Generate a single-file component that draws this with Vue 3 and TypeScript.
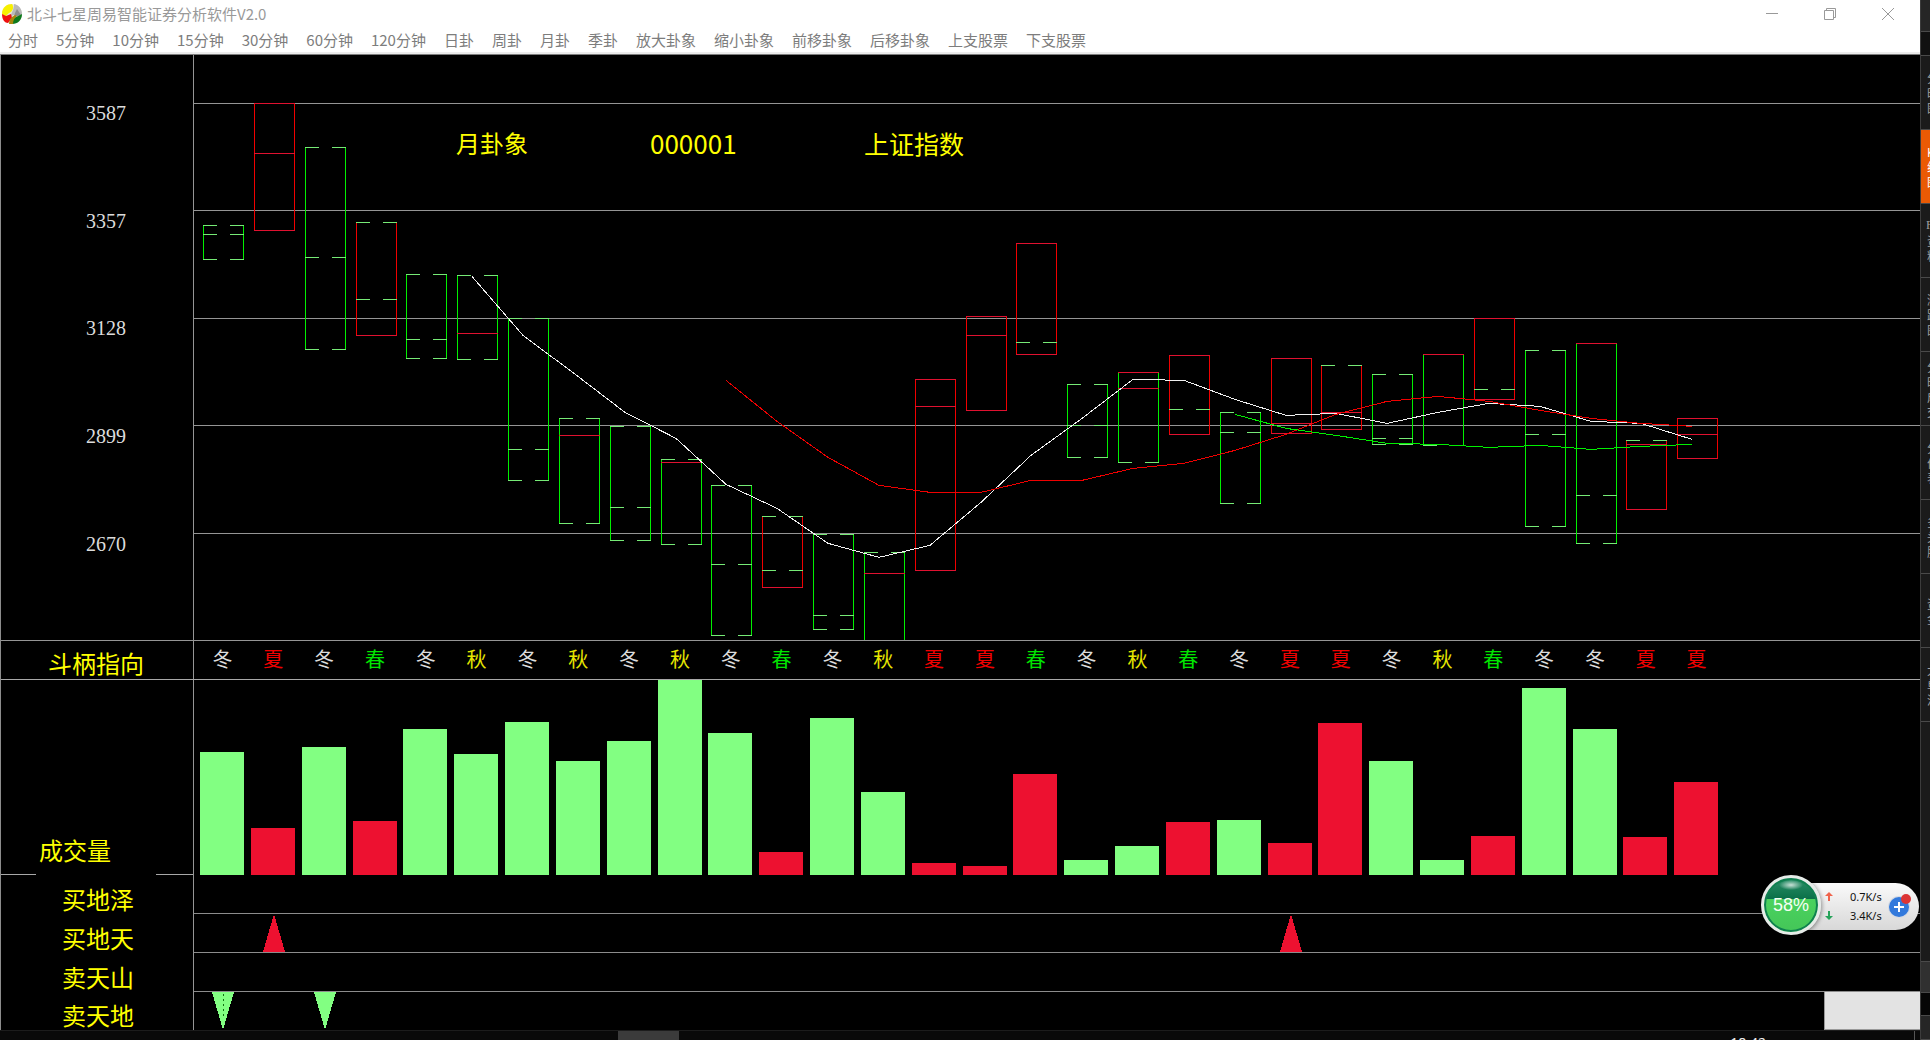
<script setup lang="ts">
type Tone = 'up' | 'down'
/** A broken (yin) or solid (yang) line of the trigram, with its height on the plot. */
type Yao = [kind: 'yin' | 'yang', y: number]
interface Candle {
  tone: Tone
  lines: [Yao, Yao, Yao]
}

const menu = [
  '分时', '5分钟', '10分钟', '15分钟', '30分钟', '60分钟', '120分钟', '日卦', '周卦',
  '月卦', '季卦', '放大卦象', '缩小卦象', '前移卦象', '后移卦象', '上支股票', '下支股票',
]

const STEP = 305 / 6
const WIDTH = 1726

const gridLines = [48, 155, 263, 370, 478]
const priceLabels = ['3587', '3357', '3128', '2899', '2670']

const down = (a: Yao, b: Yao, c: Yao): Candle => ({ tone: 'down', lines: [a, b, c] })
const up = (a: Yao, b: Yao, c: Yao): Candle => ({ tone: 'up', lines: [a, b, c] })
const o = (y: number): Yao => ['yin', y]
const s = (y: number): Yao => ['yang', y]

const candles: Candle[] = [
  down(o(170), o(179), o(204)),
  up(s(48), s(98), s(175)),
  down(o(92), o(202), o(294)),
  up(o(167), o(244), s(280)),
  down(o(219), o(284), o(303)),
  down(o(220), s(278), o(304)),
  down(o(263), o(394), o(425)),
  down(o(363), s(380), o(468)),
  down(o(371), o(452), o(485)),
  down(o(404), s(407), o(489)),
  down(o(430), o(509), o(580)),
  up(o(461), o(515), s(532)),
  down(o(479), o(560), o(574)),
  down(o(497), s(518), o(585)),
  up(s(324), s(351), s(515)),
  up(s(261), s(280), s(355)),
  up(s(188), o(287), s(299)),
  down(o(329), o(370), o(402)),
  down(s(317), s(333), o(407)),
  up(s(300), o(354), s(379)),
  down(o(357), o(377), o(448)),
  up(s(303), s(368), s(378)),
  up(o(310), s(357), s(374)),
  down(o(319), o(383), o(389)),
  down(s(299), o(390), o(390)),
  up(s(263), o(334), s(344)),
  down(o(295), o(379), o(471)),
  down(s(288), o(440), o(488)),
  up(o(385), s(389), s(454)),
  up(s(363), s(379), s(403)),
]

const boxLeft = (i: number) => Math.round(9 + i * STEP)
const BOX = 41

function yaoPath(i: number, [kind, y]: Yao): string {
  const x = boxLeft(i)
  const cy = y + 0.5
  return kind === 'yang'
    ? `M${x} ${cy}H${x + BOX}`
    : `M${x} ${cy}h14M${x + BOX - 14} ${cy}h14`
}

function sidePath(i: number, c: Candle): string {
  const x = boxLeft(i)
  const top = c.lines[0][1]
  const bottom = c.lines[2][1] + 1
  return `M${x + 0.5} ${top}V${bottom}M${x + BOX - 0.5} ${top}V${bottom}`
}

function average(first: number, ys: number[]): string {
  return ys.map((y, k) => `${Math.round(24 + (first + k) * STEP)},${y + 0.5}`).join(' ')
}

const averages = [
  {
    name: 'white',
    points: average(5, [
      221, 280, 318, 357, 383, 429, 453, 488, 502, 490, 447, 400, 363, 324, 325, 344, 360, 358,
      368, 357, 348, 351, 366, 368, 384,
    ]),
  },
  {
    name: 'red',
    points: average(10, [
      325, 366, 402, 430, 437, 437, 425, 425, 413, 408, 395, 379, 359, 346, 341, 346, 355, 363,
      368, 371,
    ]),
  },
  { name: 'green', points: average(20, [359, 373, 380, 388, 389, 392, 390, 394, 391, 389]) },
]

const seasons = [...'冬夏冬春冬秋冬秋冬秋冬春冬秋夏夏春冬秋春冬夏夏冬秋春冬冬夏夏']
const seasonClass: Record<string, string> = { 春: 'spring', 夏: 'summer', 秋: 'autumn', 冬: 'winter' }

const volumes = [
  124, 48, 129, 55, 147, 122, 154, 115, 135, 196, 143, 24, 158, 84, 13, 10, 102, 16, 30, 54, 56,
  33, 153, 115, 16, 40, 188, 147, 39, 94,
]

interface Signal {
  label: string
  size: number
  marks: number[]
  shape?: 'rise' | 'fall'
}
const signals: Signal[] = [
  { label: '买地泽', size: 39, marks: [] },
  { label: '买地天', size: 39, marks: [1, 21], shape: 'rise' },
  { label: '卖天山', size: 39, marks: [] },
  { label: '卖天地', size: 38, marks: [0, 2], shape: 'fall' },
]
function markPoints(i: number, row: Signal): string {
  const x = Math.round(29 + i * STEP)
  return row.shape === 'rise'
    ? `${x},0 ${x + 11},${row.size} ${x - 11},${row.size}`
    : `${x - 11},0 ${x + 11},0 ${x},${row.size}`
}

const sideTabs = [
  { lines: ['分', '时', '图'], active: false },
  { lines: ['K', '线', '图'], active: true },
  { lines: ['F10', '资', '料'], active: false },
  { lines: ['涨', '跌', '图'], active: false },
  { lines: ['分', '时', '成', '交'], active: false },
  { lines: ['分', '价', '表'], active: false },
  { lines: ['多', '头', '股'], active: false },
  { lines: ['资', '金'], active: false },
  { lines: ['大', '单', '流'], active: false },
]
</script>

<template>
  <div class="desktop">
    <div class="screen">
      <main class="window">
        <header class="titlebar">
          <svg class="logo" viewBox="0 0 20 20" aria-hidden="true">
            <circle cx="10" cy="10" r="10" fill="#e8e8dc" />
            <path d="M0 10C0 3 5 0 10 0c2 3 1 6-1 8-3 1-4 3-6 5z" fill="#f7f000" />
            <path d="M12 0c5 1 8 5 8 10l-4 2-5-1-2 2c-1-3 3-6 3-13z" fill="#b9b9b9" />
            <path d="M15 5l4 6-7 2 1-4z" fill="#8d8d8d" />
            <path d="M0 10l4 2 5-2 1 4-4 5C3 19 0 16 0 10z" fill="#ee1010" />
            <path d="M20 10c0 6-4 10-10 10-1-3 1-6 4-7z" fill="#0d7a1c" />
            <path d="M7 20c0-4 2-7 6-9l2 1c-3 2-4 5-4 8z" fill="#a8860c" />
          </svg>
          <h1>北斗七星周易智能证券分析软件V2.0</h1>
          <div class="controls">
            <button type="button" aria-label="最小化">
              <svg viewBox="0 0 14 14"><path d="M1 6.500H13" /></svg>
            </button>
            <button type="button" aria-label="还原">
              <svg viewBox="0 0 14 14"><path d="M1.500 3.500h9v9h-9zM3.500 3.500v-2h9v9h-2" /></svg>
            </button>
            <button type="button" aria-label="关闭">
              <svg viewBox="0 0 14 14"><path d="M1 1L13 13M13 1L1 13" /></svg>
            </button>
          </div>
        </header>

        <nav class="menu">
          <button v-for="item in menu" :key="item" type="button">{{ item }}</button>
        </nav>

        <div class="board">
          <section class="row row-price">
            <div class="side axis">
              <span v-for="p in priceLabels" :key="p">{{ p }}</span>
            </div>
            <div class="plot">
              <svg :viewBox="`0 0 ${WIDTH} 585`" preserveAspectRatio="none">
                <path
                  v-for="y in gridLines"
                  :key="y"
                  class="grid"
                  :d="`M0 ${y + 0.5}H${WIDTH}`"
                />
                <g v-for="(c, i) in candles" :key="i">
                  <path :class="c.tone" :d="sidePath(i, c)" />
                  <path v-for="(l, k) in c.lines" :key="k" :class="l[0]" :d="yaoPath(i, l)" />
                </g>
                <polyline
                  v-for="a in averages"
                  :key="a.name"
                  :class="['avg', a.name]"
                  :points="a.points"
                />
              </svg>
              <div class="caption">
                <span class="period">月卦象</span>
                <span class="code">000001</span>
                <span>上证指数</span>
              </div>
            </div>
          </section>

          <section class="row row-season">
            <div class="side name pointer">斗柄指向</div>
            <div class="plot seasons">
              <span v-for="(q, i) in seasons" :key="i" :class="seasonClass[q]">{{ q }}</span>
            </div>
          </section>

          <section class="row row-volume">
            <div class="side name volume">成交量</div>
            <div class="plot">
              <svg :viewBox="`0 0 ${WIDTH} 196`" preserveAspectRatio="none">
                <path class="grid bright" :d="`M0 195.500H${WIDTH}`" />
                <rect
                  v-for="(v, i) in volumes"
                  :key="i"
                  :class="['bar', candles[i].tone]"
                  :x="Math.round(6 + i * STEP)"
                  :y="196 - v"
                  width="44"
                  :height="v"
                />
              </svg>
            </div>
          </section>

          <section
            v-for="row in signals"
            :key="row.label"
            class="row row-signal"
            :style="{ flexGrow: row.size }"
          >
            <div class="side name">{{ row.label }}</div>
            <div class="plot">
              <svg :viewBox="`0 0 ${WIDTH} ${row.size}`" preserveAspectRatio="none">
                <polygon
                  v-for="m in row.marks"
                  :key="m"
                  :class="['mark', row.shape]"
                  :points="markPoints(m, row)"
                />
                <path v-if="row.shape === 'fall'" class="dots" d="M29.500 2V24" />
              </svg>
              <div v-if="row.shape === 'fall'" class="blank"></div>
            </div>
          </section>
        </div>

        <aside class="meter">
          <div class="pill">
            <div class="rates">
              <svg viewBox="0 0 8 9"><path d="M4 0l4 4H5v5H3V4H0z" fill="#f0644c" /></svg>
              <span>0.7K/s</span>
              <svg viewBox="0 0 8 9"><path d="M4 9l4-4H5V0H3v5H0z" fill="#27a35a" /></svg>
              <span>3.4K/s</span>
            </div>
            <button type="button" aria-label="加速">
              <svg viewBox="0 0 26 26">
                <circle cx="12" cy="14" r="11" fill="#d5dbe4" />
                <circle cx="12" cy="14" r="10" fill="#3279dc" />
                <path d="M12 9v10M7 14h10" stroke="#fff" stroke-width="2" />
                <circle cx="19" cy="6" r="5" fill="#dc3535" />
              </svg>
            </button>
          </div>
          <div class="ball">58%</div>
        </aside>
      </main>

      <aside class="strip">
        <div class="strip-head"></div>
        <div class="strip-gap"></div>
        <button
          v-for="(t, i) in sideTabs"
          :key="i"
          type="button"
          :class="{ active: t.active }"
        >
          <span v-for="(l, k) in t.lines" :key="k" :class="{ latin: l === 'F10' }">{{ l }}</span>
        </button>
        <div class="strip-rest"></div>
        <div class="strip-light"></div>
        <div class="strip-black"></div>
        <div class="strip-foot"></div>
      </aside>
    </div>
    <footer class="taskbar">
      <div class="task"></div>
      <time>18:42</time>
      <div class="peek"></div>
    </footer>
  </div>
</template>

<style>
body {
  background: #000;
  overflow: hidden;
}
</style>

<style scoped>
.desktop {
  position: relative;
  height: 100vh;
  background: #000;
  font-family: "Noto Sans CJK SC", "Noto Sans", sans-serif;
}
.screen {
  display: flex;
  height: 100%;
}
button {
  margin: 0;
  padding: 0;
  border: 0;
  background: none;
  color: inherit;
  font: inherit;
}
.window {
  position: relative;
  display: flex;
  flex: 1;
  flex-direction: column;
  min-width: 0;
  padding-bottom: 10px;
  box-sizing: border-box;
}

.titlebar {
  display: flex;
  align-items: center;
  height: 28px;
  padding-left: 2px;
  background: #fff;
  color: #999;
}
.logo {
  width: 20px;
  height: 20px;
  margin-right: 5px;
}
h1 {
  margin: 0;
  font-size: 15px;
  font-weight: 400;
  line-height: 24px;
}
.controls {
  display: flex;
  margin-left: auto;
  padding-right: 3px;
}
.controls button {
  display: grid;
  place-items: center;
  width: 58px;
  height: 28px;
}
.controls svg {
  width: 14px;
  height: 14px;
  fill: none;
  stroke: #999;
}
.menu {
  display: flex;
  gap: 18px;
  height: 24px;
  padding-left: 8px;
  border-bottom: 2px solid #ececec;
  background: #fff;
  color: #7d7d7d;
  font-size: 15px;
  line-height: 24px;
  white-space: nowrap;
}

.board {
  display: flex;
  flex: 1;
  flex-direction: column;
  min-height: 0;
  border-top: 1px solid #7d7d7d;
  border-left: 1px solid #8c8c8c;
}
.row {
  display: flex;
  flex: 39 1 0;
  min-height: 0;
  box-sizing: border-box;
}
.row-price {
  flex-grow: 586;
  border-bottom: 1px solid #959595;
}
.row-season {
  flex-grow: 38;
  border-bottom: 1px solid #a8a8a8;
}
.row-volume {
  flex-grow: 196;
}
.row-signal:not(:last-child) .plot {
  border-bottom: 1px solid #8c8c8c;
}
.side {
  flex: 0 0 193px;
  box-sizing: border-box;
  border-right: 1px solid #959595;
}
.plot {
  position: relative;
  flex: 1;
  min-width: 0;
  box-sizing: border-box;
}
.plot svg {
  display: block;
  width: 100%;
  height: 100%;
  shape-rendering: crispEdges;
}
.plot path,
.plot polyline {
  fill: none;
  vector-effect: non-scaling-stroke;
}
.grid {
  stroke: #959595;
}
.grid.bright {
  stroke: #a8a8a8;
}
.up {
  stroke: #f00000;
}
.down {
  stroke: #00f000;
}
.yang {
  stroke: #e01130;
}
.yin {
  stroke: #76ea76;
}
.avg.white {
  stroke: #f0f0f0;
}
.avg.red {
  stroke: #f00000;
}
.avg.green {
  stroke: #00f000;
}
.bar {
  stroke: none;
}
.bar.up,
.mark.rise {
  fill: #ed1130;
}
.bar.down,
.mark.fall {
  fill: #82ff82;
}
.dots {
  stroke: #107010;
  stroke-dasharray: 2 3;
}

.axis {
  display: grid;
  grid-template-rows: repeat(4, minmax(0, 215fr)) minmax(0, 214fr);
  padding-top: 47px;
  padding-left: 85px;
  color: #dcdcdc;
  font-family: "Liberation Serif", serif;
  font-size: 20px;
  line-height: 22px;
}
.caption {
  position: absolute;
  top: 73px;
  left: 262px;
  display: grid;
  grid-template-columns: 194px 214px auto;
  color: #ff0;
  font-size: 25px;
  line-height: 30px;
}
.period {
  font-size: 24px;
}
.code {
  font-size: 26px;
}
.name {
  display: flex;
  align-items: center;
  padding-left: 61px;
  color: #ff0;
  font-size: 24px;
  line-height: 30px;
}
.pointer {
  padding-top: 6px;
  padding-left: 47px;
}
.volume {
  align-items: flex-end;
  padding-bottom: 10px;
  padding-left: 38px;
  background:
    linear-gradient(#a8a8a8, #a8a8a8) left bottom / 35px 1px no-repeat,
    linear-gradient(#a8a8a8, #a8a8a8) right bottom / 37px 1px no-repeat;
}
.row-signal .name {
  padding-top: 8px;
}
.seasons {
  display: grid;
  grid-template-columns: 18fr repeat(30, minmax(0, 305fr)) 1188fr;
  align-items: center;
  font-size: 20px;
  line-height: 28px;
  text-align: center;
}
.seasons span {
  margin-top: -2px;
}
.seasons span:first-child {
  grid-column-start: 2;
}
.winter {
  color: #dcdcdc;
}
.seasons .summer {
  color: #f00000;
}
.spring {
  color: #00e600;
}
.autumn {
  color: #e6e600;
}
.blank {
  position: absolute;
  top: 0;
  right: 0;
  bottom: 0;
  width: 96px;
  box-sizing: border-box;
  border-left: 1px solid #999;
  border-bottom: 1px solid #999;
  background: #e3e3e3;
}

.meter {
  position: absolute;
  right: 1px;
  bottom: 105px;
  display: flex;
  align-items: center;
  height: 60px;
  padding-left: 30px;
}
.pill {
  display: flex;
  align-items: center;
  gap: 5px;
  width: 89px;
  height: 47px;
  margin-top: 2px;
  padding-right: 5px;
  padding-left: 34px;
  border-radius: 0 24px 24px 0;
  background: linear-gradient(#fafafa, #d8d8d8);
  color: #111;
  box-sizing: content-box;
}
.rates {
  display: grid;
  grid-template-columns: 8px auto;
  column-gap: 17px;
  align-items: center;
  font-family: "Noto Sans", sans-serif;
  font-size: 11px;
  line-height: 19px;
}
.rates svg {
  width: 8px;
  height: 9px;
}
.pill button {
  flex: none;
  width: 26px;
  height: 26px;
}
.pill button svg {
  display: block;
  width: 26px;
  height: 26px;
}
.ball {
  position: absolute;
  left: 0;
  width: 54px;
  height: 54px;
  border: 3px solid #e6ebe8;
  border-radius: 50%;
  background:
    radial-gradient(ellipse 12px 5px at 50% 13%, #ffffffc0 0, #ffffff00 100%),
    linear-gradient(#2a8f68 0, #0a7048 39%, #4ad25e 39%, #44c658 100%);
  box-shadow: inset 0 0 0 2px #0f8050, 1px 1px 4px #0006;
  color: #f4fff4;
  font-family: "Liberation Sans", sans-serif;
  font-size: 18px;
  line-height: 54px;
  text-align: center;
}

.strip {
  display: flex;
  flex: 0 0 10px;
  flex-direction: column;
  box-sizing: border-box;
  overflow: hidden;
  border-left: 1px solid #3c3c3c;
  background: #1b1b1b;
}
.strip > * {
  box-sizing: border-box;
  flex: none;
  border-bottom: 1px solid #4a4a4a;
}
.strip-head {
  height: 32px;
  background: #262626;
}
.strip-gap {
  height: 24px;
  background: #111;
}
.strip button {
  display: flex;
  flex-direction: column;
  justify-content: center;
  height: 74px;
  padding-left: 6px;
  color: #a0a0a0;
  font-family: "Noto Sans CJK SC", sans-serif;
  font-size: 12px;
  line-height: 15px;
  text-align: left;
  white-space: nowrap;
}
.strip button.active {
  background: #ea5a04;
  color: #fff;
}
.strip .latin {
  margin-left: -1px;
  font-family: "Liberation Serif", serif;
}
.strip .strip-rest {
  flex: 1;
}
.strip-light {
  height: 31px;
  background: #303030;
}
.strip-black {
  height: 23px;
  background: #060606;
}
.strip-foot {
  height: 24px;
  background: #262626;
}

.taskbar {
  position: absolute;
  right: 10px;
  bottom: 0;
  left: 0;
  display: flex;
  height: 10px;
  box-sizing: border-box;
  overflow: hidden;
  border-top: 1px solid #1c1c1c;
  background: #090909;
}
.task {
  width: 61px;
  margin-left: 32.2%;
  background: #3b3b3b;
}
time {
  margin-top: 2px;
  margin-left: auto;
  color: #eee;
  font-family: "Noto Sans", sans-serif;
  font-size: 14px;
  line-height: 20px;
}
.peek {
  width: 5px;
  margin-left: 148px;
  border-left: 1px solid #555;
}
</style>
